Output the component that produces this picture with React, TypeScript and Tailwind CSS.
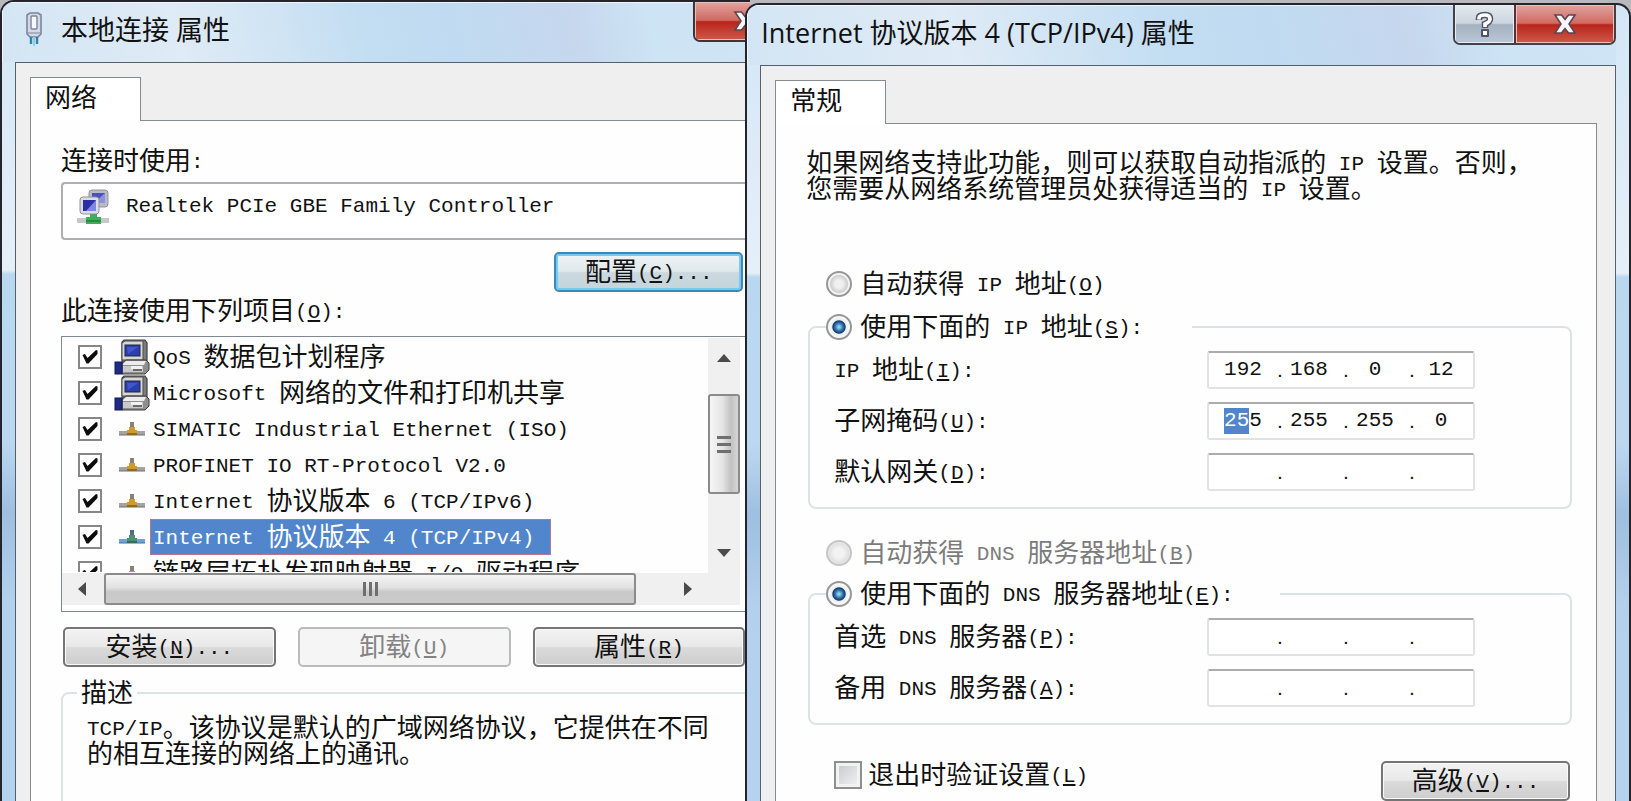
import { useEffect, useRef, type ReactNode, type RefObject } from 'react';
import { clsx } from 'clsx';

/* Splits mixed labels so Latin runs get the half-width terminal face. "&X" underlines X. */
function Label({ text, className }: { text: string; className?: string }) {
  const runs = text.match(/[\u2e80-\u9fff\uff00-\uffef\u3000-\u303f]+|[^\u2e80-\u9fff\uff00-\uffef\u3000-\u303f]+/g) ?? [];
  return (
    <span className={clsx('whitespace-pre', className)}>
      {runs.map((run, i) => {
        if (/[\u2e80-\u9fff\uff00-\uffef]/.test(run)) {
          return <span key={i}>{run}</span>;
        }
        const at = run.indexOf('&');
        return (
          <span key={i} className="align-[2px] font-['Liberation_Mono',monospace] text-[21px] leading-0">
            {at < 0 ? run : (
              <>
                {run.slice(0, at)}
                <u className="underline-offset-2">{run[at + 1]}</u>
                {run.slice(at + 2)}
              </>
            )}
          </span>
        );
      })}
    </span>
  );
}

function ConnectionIcon() {
  return (
    <svg viewBox="0 0 20 36" className="h-9 w-5" aria-hidden="true">
      <path d="M3 3 L6 1 H14 L17 3 V22 L14 25 H6 L3 22 Z" fill="#d3d9e6" stroke="#7d8597" strokeWidth="1.6" />
      <rect x="7" y="4" width="6" height="13" rx="1" fill="#f7f8fb" stroke="#7d8597" strokeWidth="1.4" />
      <path d="M4 21 H16" stroke="#9aa3b5" strokeWidth="1.5" />
      <path d="M7 25 V32 M13 25 V32" stroke="#2f83a8" strokeWidth="2.4" />
      <path d="M10 25 V34" stroke="#8fd0e8" strokeWidth="2" />
    </svg>
  );
}

function AdapterIcon() {
  return (
    <svg viewBox="0 0 34 36" className="h-9 w-[34px] shrink-0" aria-hidden="true">
      <rect x="13" y="1" width="19" height="17" rx="3" fill="#b9bbc4" stroke="#8f929c" />
      <rect x="16" y="4" width="13" height="10" fill="#4a4fc0" />
      <path d="M29 4 L18 14 H29 Z" fill="#8b90e0" />
      <rect x="4" y="8" width="19" height="17" rx="3" fill="#dcdde4" stroke="#8f929c" />
      <rect x="7" y="11" width="13" height="11" fill="#2b2fa5" />
      <path d="M20 11 L10 22 H20 Z" fill="#7f86dd" />
      <rect x="1" y="29" width="32" height="5" fill="#c5c9c7" />
      <path d="M14 25 H21 V28 H25 V35 H10 V28 H14 Z" fill="#3fae5a" />
      <path d="M10 32 H25" stroke="#2a8a45" strokeWidth="2" />
    </svg>
  );
}

function ComputerIcon() {
  return (
    <svg viewBox="0 0 36 36" className="h-9 w-9" aria-hidden="true">
      <path d="M10 1 H31 L33 4 V22 L31 24 H8 V3 Z" fill="#7d7d7d" stroke="#3f3f3f" strokeWidth="1.2" />
      <path d="M8 4 L11 2 H29 V21 H8 Z" fill="#d7d7d7" stroke="#4a4a4a" />
      <rect x="11" y="6" width="15" height="11" fill="#2c3fae" stroke="#20253f" />
      <path d="M13 8 H24 L14 15 Z" fill="#4257cf" />
      <path d="M8 24 L12 21 H32 L35 24 V31 L31 35 H8 Z" fill="#8f8f8f" stroke="#3f3f3f" />
      <path d="M9 25 L12 22 H32 L30 26 H9 Z" fill="#ececec" />
      <rect x="9" y="27" width="20" height="6" fill="#c9c9c9" />
      <rect x="17" y="27" width="11" height="3" fill="#f1f1f1" />
      <path d="M19 31 H28" stroke="#4a4a4a" strokeWidth="1.5" />
      <rect x="1" y="23" width="7" height="12" fill="#1d2a86" stroke="#141a4d" />
    </svg>
  );
}

function ProtocolIcon({ active }: { active?: boolean }) {
  return (
    <svg viewBox="0 0 36 36" className="h-9 w-9" aria-hidden="true">
      <rect x="5" y="20" width="26" height="4" fill={active ? '#6fa3d6' : '#a3a3a3'} />
      <path d="M5 24 H31" stroke={active ? '#3e6ea8' : '#6f6f6f'} />
      <rect x="16" y="11" width="4" height="6" fill={active ? '#4d6b86' : '#8a7f78'} />
      <path d="M15 16 H21 V19 H23 V24 H13 V19 H15 Z" fill={active ? '#4f8f74' : '#d09a2a'} />
      <path d="M13 23 H23" stroke={active ? '#2f6350' : '#7f5a14'} strokeWidth="1.5" />
    </svg>
  );
}

function CloseButton({ className }: { className: string }) {
  return (
    <button
      type="button"
      aria-label="关闭"
      className={clsx(
        'flex h-full items-center justify-center bg-[linear-gradient(#e0a49f,#d06a62_48%,#b8241a_52%,#cf5a4a)] shadow-[inset_0_0_0_1px_#ecc0ba]',
        className,
      )}
    >
      <svg viewBox="0 0 24 24" className="h-6 w-6" aria-hidden="true">
        <path
          d="M2 3 H8.500 L12 7.500 L15.500 3 H22 L16 12 L22 21 H15.500 L12 16.500 L8.500 21 H2 L8 12 Z"
          fill="#f6f6f8"
          stroke="#5d4650"
          strokeWidth="1.600"
        />
      </svg>
    </button>
  );
}

interface DialogProps {
  title: ReactNode;
  controls: ReactNode;
  tab: string;
  className: string;
  frameClass: string;
  pageClass: string;
  children: ReactNode;
}

function Dialog({ title, controls, tab, className, frameClass, pageClass, children }: DialogProps) {
  return (
    <section
      className={clsx(
        'flex flex-col overflow-hidden border-t-2 border-l-2 border-[#23242c] bg-[linear-gradient(#d3e6f5_0px,#e6eff8_268px,#b9d8ef_272px,#bcd8f0_440px,#9fbfe0_510px,#b3d0ec_600px,#b5d3ee)] pl-[13px]',
        className,
      )}
    >
      <header className="-ml-[13px] flex h-[60px] shrink-0 items-start justify-between bg-[linear-gradient(75deg,#d3e5f4,#dfebf6_24%,#c3def2_48%,#c0dbf1_60%,#c6d7ee_76%,#cde4f4_86%,#cfe4f4)] shadow-[inset_1px_1px_0_#ffffffb0]">
        <h1 className="flex h-[56px] items-center whitespace-pre font-['Open_Sans','Noto_Sans_CJK_SC',sans-serif] text-[27px]">
          {title}
        </h1>
        {controls}
      </header>
      <div className={clsx('flex flex-1 flex-col border-t border-l border-[#56606d] bg-[#efefef] pt-[14px] pl-[14px]', frameClass)}>
        <div role="tablist" className="relative z-10 -mb-px flex">
          <button
            type="button"
            role="tab"
            aria-selected="true"
            className="flex h-11 w-[111px] justify-start border border-b-0 border-[#868b93] bg-white pt-[2px] pl-[14px] leading-8"
          >
            {tab}
          </button>
        </div>
        <div className={clsx('flex flex-1 flex-col border-t border-l border-[#868b93] bg-[#fefefe]', pageClass)}>
          {children}
        </div>
      </div>
    </section>
  );
}

function PushButton({ text, className, disabled, focused }: { text: string; className?: string; disabled?: boolean; focused?: boolean }) {
  return (
    <button
      type="button"
      disabled={disabled}
      className={clsx(
        'flex h-10 items-center justify-center rounded-[5px] border-2',
        disabled && 'border-[#b9bbbd] bg-[#f5f5f5] text-[#838383]',
        focused && 'border-[#3f87b5] bg-[linear-gradient(#eef3f5,#e1e8eb_48%,#cbd8de_52%,#c3d5dd)] shadow-[inset_0_0_0_2px_#6fcdf2]',
        !disabled && !focused && 'border-[#757575] bg-[linear-gradient(#f2f2f2,#e9e9e9_48%,#dadada_52%,#cecece)] shadow-[inset_0_0_0_1px_#fafafa]',
        className,
      )}
    >
      <Label text={text} className="pb-1" />
    </button>
  );
}

const items = [
  { text: 'QoS 数据包计划程序', icon: 'computer' },
  { text: 'Microsoft 网络的文件和打印机共享', icon: 'computer' },
  { text: 'SIMATIC Industrial Ethernet (ISO)', icon: 'protocol' },
  { text: 'PROFINET IO RT-Protocol V2.0', icon: 'protocol' },
  { text: 'Internet 协议版本 6 (TCP/IPv6)', icon: 'protocol' },
  { text: 'Internet 协议版本 4 (TCP/IPv4)', icon: 'protocol', selected: true },
  { text: '链路层拓扑发现映射器 I/O 驱动程序', icon: 'protocol' },
];

function ItemList() {
  return (
    <div className="mt-[9px] flex h-[276px] flex-col border border-r-0 border-[#7f8791] bg-[#fefefe] pt-px">
      <div className="flex min-h-0 flex-1">
        <ul className="h-[234px] flex-1 overflow-hidden pt-px">
          {items.map((item) => (
            <li key={item.text} className="pl-4">
              <label className="flex h-9 items-center">
                <span className="mr-3 grid h-6 w-6 place-items-center">
                  <input
                    type="checkbox"
                    defaultChecked
                    className="col-start-1 row-start-1 h-6 w-6 appearance-none border-2 border-[#868686] bg-white"
                  />
                  <svg viewBox="0 0 16 16" className="pointer-events-none col-start-1 row-start-1 h-4 w-4" aria-hidden="true">
                    <path d="M0.500 6 L3 5 L5.500 9 L14 1 L15.500 1.500 V5 L6.500 14.500 L4.500 14.500 Z" fill="#0c0c0c" />
                  </svg>
                </span>
                {item.icon === 'computer' ? <ComputerIcon /> : <ProtocolIcon active={item.selected} />}
                <span
                  className={clsx(
                    'flex h-9 items-center border px-[2px]',
                    item.selected ? 'border-[#b5798a] bg-[#5186cd] pr-4 text-white' : 'border-transparent',
                  )}
                >
                  <Label text={item.text} className="pb-1" />
                </span>
              </label>
            </li>
          ))}
        </ul>
        <div className="mr-[10px] flex w-8 flex-col items-center bg-[#f0f0f0] py-4">
          <svg viewBox="0 0 14 8" className="h-2 w-[14px]" aria-hidden="true">
            <path d="M7 0 L14 8 H0 Z" fill="#4a4a4a" />
          </svg>
          <div className="mt-8 flex h-[100px] w-8 flex-col items-center justify-center gap-1 rounded-[3px] border-2 border-[#8b8b8b] bg-[linear-gradient(90deg,#f6f6f6,#e4e4e4_45%,#c2c2c2_75%,#d6d6d6)]">
            <span className="h-[3px] w-[14px] bg-[#6f6f6f]" />
            <span className="h-[3px] w-[14px] bg-[#6f6f6f]" />
            <span className="h-[3px] w-[14px] bg-[#6f6f6f]" />
          </div>
          <svg viewBox="0 0 14 8" className="mt-auto h-2 w-[14px]" aria-hidden="true">
            <path d="M0 0 H14 L7 8 Z" fill="#4a4a4a" />
          </svg>
        </div>
      </div>
      <div className="mr-[10px] mb-[6px] flex h-8 items-center bg-[#f0f0f0] pl-4">
        <svg viewBox="0 0 8 14" className="h-[14px] w-2" aria-hidden="true">
          <path d="M8 0 V14 L0 7 Z" fill="#4a4a4a" />
        </svg>
        <div className="ml-[18px] flex h-8 flex-1 items-center justify-center gap-[3px] rounded-[3px] border-2 border-[#8b8b8b] bg-[linear-gradient(#f4f4f4,#e2e2e2_45%,#c8c8c8_60%,#cbcbcb)]">
          <span className="h-[14px] w-[3px] bg-[#6f6f6f]" />
          <span className="h-[14px] w-[3px] bg-[#6f6f6f]" />
          <span className="h-[14px] w-[3px] bg-[#6f6f6f]" />
        </div>
        <svg viewBox="0 0 8 14" className="mr-12 ml-12 h-[14px] w-2" aria-hidden="true">
          <path d="M0 0 L8 7 L0 14 Z" fill="#4a4a4a" />
        </svg>
      </div>
    </div>
  );
}

function AddressRow({ id, text, octets, firstRef }: { id: string; text: string; octets: string[]; firstRef?: RefObject<HTMLInputElement | null> }) {
  return (
    <div className="flex items-center pr-[79px] pl-2">
      <label htmlFor={`${id}-0`} className="flex flex-1">
        <Label text={text} className="pb-1" />
      </label>
      <div className="flex h-[38px] w-[268px] items-center rounded-[3px] border-2 border-[#e1e3e3] border-t-[#ababab] bg-white pl-2 font-['Liberation_Mono',monospace] text-[21px]">
        {octets.map((value, i) => (
          <span key={i} className="flex shrink-0 items-center">
            {i > 0 && <span className="w-[6px] font-['Liberation_Sans',sans-serif]">.</span>}
            <input
              id={`${id}-${i}`}
              ref={i === 0 ? firstRef : undefined}
              aria-label={`${text.replace('&', '')} ${i + 1}`}
              defaultValue={value}
              maxLength={3}
              className="w-[60px] pr-2 text-center leading-[26px] outline-none selection:bg-[#5186cd] selection:text-white"
            />
          </span>
        ))}
      </div>
    </div>
  );
}

function Radio({ name, text, checked, disabled }: { name: string; text: string; checked?: boolean; disabled?: boolean }) {
  return (
    <label className={clsx('flex h-8 items-center gap-2', disabled && 'text-[#7c7c7c]')}>
      <input
        type="radio"
        name={name}
        defaultChecked={checked}
        disabled={disabled}
        className="h-[26px] w-[26px] shrink-0 appearance-none rounded-full border-2 border-[#979797] bg-[radial-gradient(circle,#f0f0f0_25%,#cfcfcf_55%,#f4f4f4_62%)] checked:bg-[radial-gradient(circle_at_50%_50%,#8fd0f0_6%,#3378b4_24%,#173a63_40%,#e9edf1_46%,#f7f7f7_62%)] disabled:border-[#c6c6c6] disabled:bg-[radial-gradient(circle,#f3f3f3_30%,#e2e2e2_60%,#f6f6f6)]"
      />
      <Label text={text} className="pb-1" />
    </label>
  );
}

const groupClass = 'ml-[2px] rounded-[8px] border-2 border-[#dbe3e4] px-4 pb-4';

export default function App() {
  const maskRef = useRef<HTMLInputElement>(null);

  useEffect(() => {
    maskRef.current?.focus();
    maskRef.current?.setSelectionRange(0, 2);
  }, []);

  return (
    <main className="flex min-h-screen items-stretch overflow-hidden bg-[#b9b9bd] font-['Noto_Sans_CJK_SC',sans-serif] text-[26px] leading-[26px] text-[#111]">
      <Dialog
        className="w-[46%] shrink-0 rounded-tl-[14px]"
        frameClass=""
        pageClass="pt-6 pl-[30px]"
        tab="网络"
        title={
          <span className="flex items-center gap-[17px] pl-[22px]">
            <ConnectionIcon />
            本地连接 属性
          </span>
        }
        controls={
          <div className="h-10 w-[57px] overflow-hidden rounded-bl-[7px] border-2 border-t-0 border-r-0 border-[#3d3338]">
            <CloseButton className="w-[100px]" />
          </div>
        }
      >
        <label htmlFor="adapter" className="h-8 leading-7">
          <Label text="连接时使用:" />
        </label>
        <div className="mt-[5px] flex h-[58px] items-center rounded-l-[4px] border-2 border-r-0 border-[#adb0b3] bg-white pb-2 pl-[13px]">
          <AdapterIcon />
          <input
            id="adapter"
            readOnly
            value="Realtek PCIe GBE Family Controller"
            className="ml-4 min-w-0 flex-1 font-['Liberation_Mono',monospace] text-[21px] outline-none"
          />
        </div>
        <PushButton text="配置(&C)..." focused className="mt-3 mr-[7px] w-[189px] self-end" />
        <h2 className="mt-[3px] h-8 leading-7">
          <Label text="此连接使用下列项目(&O):" />
        </h2>
        <ItemList />
        <div className="mt-[15px] mr-[5px] flex gap-[22px] pl-[2px]">
          <PushButton text="安装(&N)..." className="flex-1" />
          <PushButton text="卸载(&U)" disabled className="flex-1" />
          <PushButton text="属性(&R)" className="flex-1" />
        </div>
        <fieldset className="mt-[10px] min-w-0 flex-1 rounded-tl-[8px] border-t-2 border-l-2 border-[#dbe3e4] pl-[14px]">
          <legend className="h-8 px-1 leading-7">描述</legend>
          <p className="pt-1 pl-[10px]">
            <Label text="TCP/IP。该协议是默认的广域网络协议，它提供在不同" />
            <br />
            <Label text="的相互连接的网络上的通讯。" />
          </p>
        </fieldset>
      </Dialog>

      <Dialog
        className="relative z-10 -ml-[5px] mt-[3px] min-w-0 flex-1 rounded-t-[14px] border-r-2 pr-[13px]"
        frameClass="border-r pr-[18px]"
        pageClass="border-r pt-6 pr-6 pl-[30px]"
        tab="常规"
        title={<span className="pl-[14px]">Internet 协议版本 4 (TCP/IPv4) 属性</span>}
        controls={
          <div className="flex h-10 overflow-hidden rounded-b-[7px] border-2 border-t-0 border-[#454047]">
            <button
              type="button"
              aria-label="帮助"
              className="flex w-[59px] items-center justify-center bg-[linear-gradient(#e3eaf0,#cbd5de_48%,#a3b1c1_52%,#b9c7d6)] shadow-[inset_0_0_0_1px_#e8eef4]"
            >
              <svg viewBox="0 0 20 26" className="h-[26px] w-5" aria-hidden="true">
                <path d="M4 9 V7 Q4 4 10 4 Q15 4 15 8 Q15 11 10 13 V17" fill="none" stroke="#4f5664" strokeWidth="6.500" />
                <rect x="6" y="18" width="8" height="8" rx="1" fill="#4f5664" />
                <path d="M4 8.500 V7 Q4 4 10 4 Q15 4 15 8 Q15 11 10 13 V16" fill="none" stroke="#fff" strokeWidth="3.600" />
                <rect x="8" y="20" width="4" height="4" fill="#fff" />
              </svg>
            </button>
            <CloseButton className="w-[100px] border-l-2 border-[#5a3038]" />
          </div>
        }
      >
        <p>
          <Label text="如果网络支持此功能，则可以获取自动指派的 IP 设置。否则，" />
          <br />
          <Label text="您需要从网络系统管理员处获得适当的 IP 设置。" />
        </p>
        <div className="mt-[68px] pl-5">
          <Radio name="ip" text="自动获得 IP 地址(&O)" />
        </div>
        <fieldset className={clsx('mt-[11px]', groupClass)}>
          <legend className="w-[366px]">
            <Radio name="ip" text="使用下面的 IP 地址(&S):" checked />
          </legend>
          <div className="flex flex-col gap-[13px] pt-2">
            <AddressRow id="ip" text="IP 地址(&I):" octets={['192', '168', '0', '12']} />
            <AddressRow id="mask" text="子网掩码(&U):" octets={['255', '255', '255', '0']} firstRef={maskRef} />
            <AddressRow id="gateway" text="默认网关(&D):" octets={['', '', '', '']} />
          </div>
        </fieldset>
        <div className="mt-7 pl-5">
          <Radio name="dns" text="自动获得 DNS 服务器地址(&B)" disabled />
        </div>
        <fieldset className={clsx('mt-[9px]', groupClass)}>
          <legend className="w-[454px]">
            <Radio name="dns" text="使用下面的 DNS 服务器地址(&E):" checked />
          </legend>
          <div className="flex flex-col gap-[13px] pt-2">
            <AddressRow id="dns1" text="首选 DNS 服务器(&P):" octets={['', '', '', '']} />
            <AddressRow id="dns2" text="备用 DNS 服务器(&A):" octets={['', '', '', '']} />
          </div>
        </fieldset>
        <div className="mt-[34px] flex items-start justify-between pl-7">
          <label className="flex h-8 items-center gap-[6px]">
            <input
              type="checkbox"
              className="h-7 w-7 appearance-none border-2 border-[#8e8f8f] bg-[linear-gradient(135deg,#c4c7c9,#f4f4f4)] shadow-[inset_0_0_0_3px_#f2f2f2]"
            />
            <Label text="退出时验证设置(&L)" className="pb-1" />
          </label>
          <PushButton text="高级(&V)..." className="mt-[2px] mr-[2px] w-[189px]" />
        </div>
      </Dialog>
    </main>
  );
}
